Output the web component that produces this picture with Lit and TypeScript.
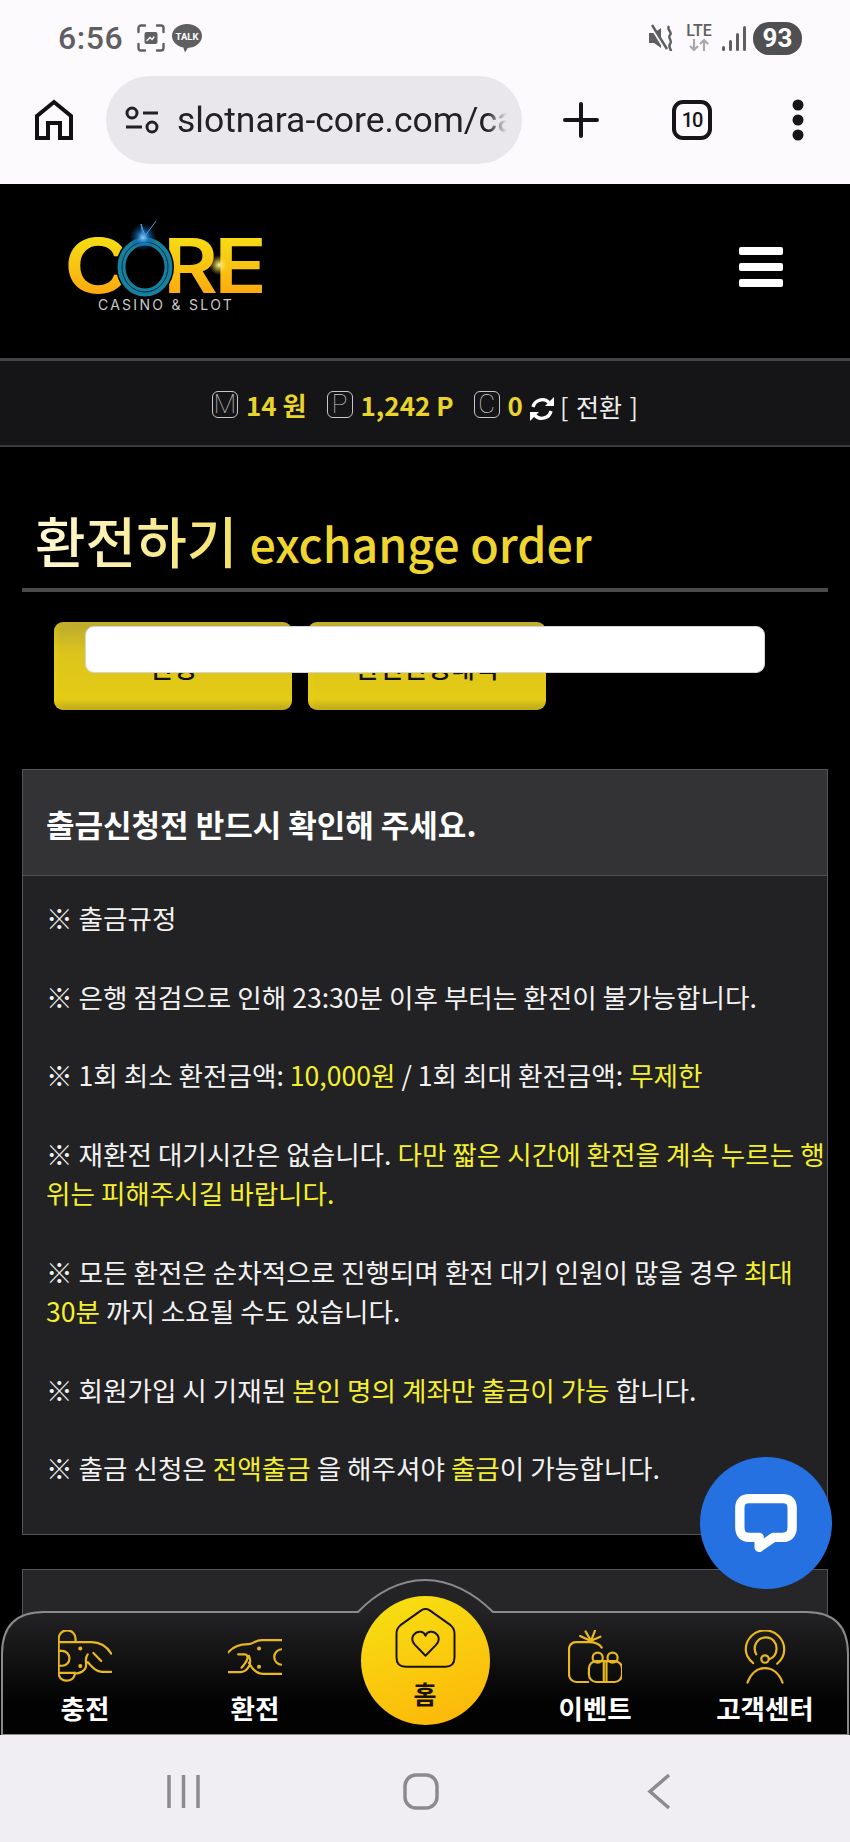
import { LitElement, css, html } from 'lit';
import { customElement } from 'lit/decorators.js';

const iconCharge = html`<svg class="nav-icon" viewBox="0 0 160 160">
  <path d="M52 36V26A25 25 0 0 0 2 26V132A25 25 0 0 0 50 132V126M2 36H100C125 36 145 50 158 70M2 62H12A22 22 0 0 1 12 106H2M2 127H50M105 68L128 92M88 72C74 90 92 104 78 118C70 126 60 130 50 128M88 95C105 115 115 124 130 124H158"/>
  <circle class="dot" cx="66" cy="55" r="6"/><circle class="dot" cx="66" cy="107" r="6"/>
</svg>`;

const iconExchange = html`<svg class="nav-icon" viewBox="0 -27 160 160">
  <path d="M0 40C15 22 35 15 60 15C75 15 80 3 100 3H160M30 45H50C62 48 62 60 40 85M0 98H35C60 98 72 70 62 50M62 70C72 90 85 103 105 103H160M160 30A22 22 0 1 0 160 76"/>
  <circle class="dot" cx="92" cy="28" r="6"/><circle class="dot" cx="92" cy="82" r="6"/>
</svg>`;

const iconEvent = html`<svg class="nav-icon" viewBox="0 0 160 160">
  <path d="M60 154H25A22 22 0 0 1 3 132V56A20 20 0 0 1 23 36H62C80 36 92 40 100 52M52 4L68 32M80 2L68 32M36 18L66 32M96 20L68 32"/>
  <rect x="62" y="92" width="98" height="62" rx="22"/>
  <path d="M106 92V154M114 92V154"/>
  <circle cx="88" cy="82" r="15"/><circle cx="132" cy="82" r="15"/>
</svg>`;

const iconSupport = html`<svg class="nav-icon" viewBox="-20 0 160 160">
  <path d="M25 98C10 86 3 72 3 58A57 57 0 0 1 117 58C117 76 108 90 96 100M34 72C22 50 36 22 62 22C82 22 96 38 94 58C93 72 84 82 74 86M8 156C18 128 38 113 60 113C82 113 102 128 112 156"/>
  <circle cx="60" cy="86" r="11"/>
</svg>`;

@customElement('app-root')
export class AppRoot extends LitElement {
  static styles = css`
    :host {
      display: flex;
      flex-direction: column;
      width: 850px;
      height: 1842px;
      overflow: hidden;
      font-family: "Noto Sans CJK KR", "Noto Sans", sans-serif;
      background: #000;
    }

    /* phone status bar */
    .status {
      height: 76px;
      flex: none;
      background: #fcfafd;
      display: flex;
      align-items: center;
      padding: 0 48px 0 58px;
      color: #5f5f61;
    }
    .time {
      font-family: Roboto, sans-serif;
      font-size: 32px;
      font-weight: 500;
      letter-spacing: 0.6px;
      width: 79px;
    }
    .shot { width: 28px; height: 28px; }
    .talk { width: 30px; height: 30px; margin-left: 7px; }
    .status-right { margin-left: auto; display: flex; align-items: center; }
    .mute { width: 26px; height: 28px; }
    .lte {
      margin-left: 9px;
      width: 30px;
      display: flex;
      flex-direction: column;
      align-items: center;
      font-family: Roboto, sans-serif;
      font-size: 16px;
      font-weight: 500;
      line-height: 14px;
    }
    .lte svg { width: 22px; height: 14px; }
    .signal { width: 24px; height: 26px; margin-left: 8px; }
    .battery {
      margin-left: 7px;
      width: 49px;
      height: 33px;
      border-radius: 16px;
      background: #505052;
      color: #fff;
      font-family: Roboto, sans-serif;
      font-weight: 700;
      font-size: 26px;
      line-height: 33px;
      text-align: center;
    }

    /* browser toolbar */
    .toolbar {
      height: 108px;
      flex: none;
      background: #fcfafd;
      display: flex;
      align-items: center;
      padding-bottom: 20px;
      box-sizing: border-box;
    }
    .t-home { width: 38px; height: 42px; margin-left: 35px; }
    .url {
      margin-left: 33px;
      width: 416px;
      height: 88px;
      border-radius: 44px;
      background: #e9e7eb;
      display: flex;
      align-items: center;
      padding-left: 19px;
      box-sizing: border-box;
      overflow: hidden;
      flex: none;
    }
    .tune { width: 34px; height: 28px; flex: none; }
    .url-text {
      margin-left: 18px;
      width: 330px;
      overflow: hidden;
      white-space: nowrap;
      font-family: Roboto, sans-serif;
      font-size: 35.5px;
      color: #222226;
      -webkit-mask-image: linear-gradient(90deg, #000 94%, transparent);
      mask-image: linear-gradient(90deg, #000 94%, transparent);
    }
    .plus { width: 36px; height: 36px; margin-left: 41px; }
    .tabs {
      margin-left: 73px;
      width: 40px;
      height: 40px;
      border: 4px solid #16161a;
      border-radius: 11px;
      box-sizing: border-box;
      font-family: Roboto, sans-serif;
      font-size: 20px;
      line-height: 32px;
      font-weight: 500;
      text-align: center;
      color: #16161a;
      letter-spacing: -1px;
    }
    .more { width: 12px; height: 42px; margin-left: 80px; }

    /* site */
    .site {
      flex: 1;
      position: relative;
      overflow: hidden;
      background: #000;
    }
    .head {
      height: 174px;
      display: flex;
      justify-content: space-between;
      align-items: flex-start;
      padding: 31px 67px 0 55px;
      box-sizing: border-box;
    }
    .logo { width: 225px; height: 105px; }
    .burger {
      margin-top: 32px;
      display: flex;
      flex-direction: column;
      gap: 8px;
    }
    .burger i {
      display: block;
      width: 44px;
      height: 8px;
      border-radius: 2px;
      background: #fff;
    }
    .balance {
      height: 89px;
      box-sizing: border-box;
      border-top: 3px solid #434345;
      border-bottom: 2px solid #3a3a3c;
      background: #151517;
      display: flex;
      align-items: center;
      padding: 3px 0 0 212px;
      font-weight: 700;
      font-size: 26px;
      color: #e9d42c;
    }
    .balance .coin {
      width: 26px;
      height: 27px;
      border: 1.5px solid #c8c8c8;
      border-radius: 6px;
      box-sizing: border-box;
      color: #c8c8c8;
      font-family: Roboto, sans-serif;
      font-weight: 100;
      font-size: 26px;
      line-height: 24px;
      text-align: center;
      margin-right: 8px;
    }
    .balance .val { margin-right: 20px; line-height: 30px; }
    .balance .refresh { width: 26px; height: 26px; margin: 8px 5px 0 -14px; }
    .balance .swap {
      font-weight: 400;
      color: #eee;
      font-size: 25px;
      margin-top: 3px;
      word-spacing: 2px;
    }

    .title {
      height: 145px;
      margin: 0 22px;
      padding: 57px 0 0 13px;
      box-sizing: border-box;
      border-bottom: 4px solid #4a4a4c;
      display: flex;
      align-items: baseline;
      gap: 12px;
    }
    .title .ko {
      font-size: 55px;
      font-weight: 500;
      line-height: 70px;
      background: linear-gradient(90deg, #fff8d6, #f5e268);
      -webkit-background-clip: text;
      background-clip: text;
      color: transparent;
    }
    .title .en {
      font-size: 46.5px;
      font-weight: 500;
      line-height: 70px;
      color: #eed52f;
    }

    .actions {
      position: relative;
      display: flex;
      gap: 16px;
      padding: 30px 0 0 54px;
    }
    .btn {
      width: 238px;
      height: 88px;
      border-radius: 9px;
      background: linear-gradient(180deg, #bba92e, #dcc41c 35%, #e4cb16 88%, #b9a420);
      box-shadow: inset 4px 0 5px #f0d8184d;
      color: #111;
      font-size: 26px;
      font-weight: 500;
      display: flex;
      align-items: center;
      justify-content: center;
    }
    .mask {
      position: absolute;
      left: 85px;
      top: 34px;
      width: 680px;
      height: 47px;
      box-sizing: border-box;
      background: #fff;
      border: 1px solid #d5d5d5;
      border-radius: 9px;
    }

    .panel {
      margin: 59px 22px 0;
      border: 1px solid #555557;
      background: #222224;
    }
    .panel-head {
      height: 106px;
      box-sizing: border-box;
      background: #333335;
      border-bottom: 1px solid #4f4f51;
      padding: 2px 0 0 23px;
      display: flex;
      align-items: center;
      font-size: 31px;
      font-weight: 700;
      color: #fff;
    }
    .panel-body {
      padding: 22px 0 47px 23px;
      font-size: 26.6px;
      line-height: 39.3px;
      color: #f2f2f2;
    }
    .panel-body em { font-style: normal; color: #f4f02e; }
    .panel.next {
      margin-top: 34px;
      height: 170px;
      background: #262628;
    }

    .chat {
      position: absolute;
      left: 700px;
      top: 1273px;
      width: 132px;
      height: 132px;
      border-radius: 50%;
      background: #2571e2;
      display: flex;
      align-items: center;
      justify-content: center;
    }
    .chat svg { width: 62px; height: 61px; margin-top: 2px; }

    /* bottom tab bar */
    .tabbar {
      position: absolute;
      left: 0;
      right: 0;
      bottom: 0;
      height: 156px;
      display: grid;
      grid-template-columns: repeat(5, 170px);
    }
    .tabbar-bg { position: absolute; inset: 0; width: 850px; height: 156px; }
    .item {
      position: relative;
      display: flex;
      flex-direction: column;
      align-items: center;
      padding-top: 51px;
      color: #fff;
      font-size: 26.5px;
      font-weight: 700;
      line-height: 30px;
      white-space: nowrap;
    }
    .item span { margin-top: 9px; }
    .nav-icon {
      width: 54px;
      height: 54px;
      fill: none;
      stroke: #e9b71f;
      stroke-width: 6.5;
      stroke-linecap: round;
      stroke-linejoin: round;
    }
    .nav-icon .dot { fill: #e9b71f; stroke: none; }
    .home {
      position: relative;
      justify-self: center;
      margin-top: 17px;
      width: 129px;
      height: 129px;
      border-radius: 50%;
      background: linear-gradient(160deg, #f6e211, #fdb40a);
      display: flex;
      flex-direction: column;
      align-items: center;
      padding-top: 12px;
      box-sizing: border-box;
      font-size: 25px;
      font-weight: 700;
      color: #1a1206;
      line-height: 30px;
    }
    .home svg { width: 61px; height: 60px; margin-bottom: 10px; }

    /* android nav */
    .android {
      height: 107px;
      flex: none;
      background: #f0eef2;
    }
    .android svg { display: block; width: 850px; height: 107px; }
  `;

  render() {
    return html`
      <div class="status">
        <span class="time">6:56</span>
        <svg class="shot" viewBox="0 0 28 28" fill="none" stroke="#5f5f61" stroke-width="2.4" stroke-linecap="round">
          <path d="M1.5 8V4A2.5 2.5 0 0 1 4 1.500H8M20 1.500H24A2.500 2.500 0 0 1 26.500 4V8M26.500 20V24A2.500 2.500 0 0 1 24 26.500H20M8 26.500H4A2.500 2.500 0 0 1 1.500 24V20"/>
          <rect x="7.500" y="8" width="13" height="12" rx="2" fill="#5f5f61" stroke="none"/>
          <path d="M10 16.500L13 13.500L15 15.500L17 13" stroke="#fcfafd" stroke-width="1.400"/>
        </svg>
        <svg class="talk" viewBox="0 0 30 30">
          <path d="M15 1C23.300 1 30 6.200 30 13C30 19.600 23.600 24.700 15.800 24.900L13 29.500L11.300 24.600C5 23.300 0 18.600 0 13C0 6.200 6.700 1 15 1Z" fill="#5f5f61"/>
          <text x="15" y="17" text-anchor="middle" font-family="Roboto, sans-serif" font-weight="700" font-size="9.500" fill="#fff">TALK</text>
        </svg>
        <div class="status-right">
          <svg class="mute" viewBox="0 0 26 28" fill="#5f5f61">
            <path d="M0 9H5L12 4V24L5 19H0Z"/>
            <path d="M2 2L16 25" stroke="#fcfafd" stroke-width="3"/>
            <path d="M3 1L18 25" stroke="#5f5f61" stroke-width="2.500"/>
            <path d="M20 2C17 6 24 8 21 11C18 14 24 16 21 20C19 23 22 25 22 27" fill="none" stroke="#5f5f61" stroke-width="2.400"/>
          </svg>
          <div class="lte">
            LTE
            <svg viewBox="0 0 22 14" fill="none" stroke="#a9a9ab" stroke-width="2.200">
              <path d="M6 1V12M2 8L6 12L10 8M16 13V2M12 6L16 2L20 6"/>
            </svg>
          </div>
          <svg class="signal" viewBox="0 0 24 26" fill="#5f5f61">
            <rect x="0" y="21" width="3" height="5" rx="1.500"/>
            <rect x="7" y="15" width="3" height="11" rx="1.500"/>
            <rect x="14" y="8" width="3" height="18" rx="1.500"/>
            <rect x="21" y="1" width="3" height="25" rx="1.500"/>
          </svg>
          <div class="battery">93</div>
        </div>
      </div>

      <div class="toolbar">
        <svg class="t-home" viewBox="0 0 38 42" fill="none" stroke="#111114" stroke-width="4" stroke-linejoin="miter">
          <path d="M2 39V17L19 3L36 17V39H25V24H13V39Z"/>
        </svg>
        <div class="url">
          <svg class="tune" viewBox="0 0 34 28" fill="none" stroke="#222226" stroke-width="3">
            <circle cx="7" cy="7" r="5"/><circle cx="27" cy="21" r="5"/>
            <path d="M18 7H33M1 21H17"/>
          </svg>
          <div class="url-text">slotnara-core.com/ca</div>
        </div>
        <svg class="plus" viewBox="0 0 36 36" stroke="#16161a" stroke-width="4" stroke-linecap="round">
          <path d="M18 2V34M2 18H34"/>
        </svg>
        <div class="tabs">10</div>
        <svg class="more" viewBox="0 0 12 42" fill="#16161a">
          <circle cx="6" cy="6" r="5.500"/><circle cx="6" cy="21" r="5.500"/><circle cx="6" cy="36" r="5.500"/>
        </svg>
      </div>

      <div class="site">
        <div class="head">
          <svg class="logo" viewBox="0 0 225 105">
            <defs>
              <linearGradient id="gold" gradientUnits="userSpaceOnUse" x1="0" y1="24" x2="0" y2="80">
                <stop offset="0" stop-color="#f5dc14"/>
                <stop offset="1" stop-color="#fda90f"/>
              </linearGradient>
              <radialGradient id="flare">
                <stop offset="0" stop-color="#9fd8ff"/>
                <stop offset="0.4" stop-color="#1f7fd0" stop-opacity="0.7"/>
                <stop offset="1" stop-color="#0a3d70" stop-opacity="0"/>
              </radialGradient>
              <radialGradient id="spark">
                <stop offset="0" stop-color="#fff6a0"/>
                <stop offset="1" stop-color="#f5d010" stop-opacity="0"/>
              </radialGradient>
            </defs>
            <g fill="url(#gold)" font-family="Inter, sans-serif" font-weight="600" font-size="75">
              <text x="9" y="78" textLength="66" lengthAdjust="spacingAndGlyphs">C</text>
              <text x="108" y="78" textLength="55" lengthAdjust="spacingAndGlyphs">R</text>
              <text x="159" y="78" textLength="53" lengthAdjust="spacingAndGlyphs">E</text>
            </g>
            <ellipse cx="90" cy="52" rx="29" ry="31" fill="#000"/>
            <ellipse cx="90" cy="52" rx="23.500" ry="25.500" fill="none" stroke="#15809f" stroke-width="8"/>
            <ellipse cx="90" cy="52" rx="23" ry="25" fill="none" stroke="#062a38" stroke-width="1"/>
            <circle cx="88" cy="22" r="14" fill="url(#flare)"/>
            <path d="M101 6L90 21L86 9L88 22" fill="none" stroke="#3f9fe0" stroke-width="1"/>
            <circle cx="164" cy="50" r="10" fill="url(#spark)"/>
            <text x="111" y="95" text-anchor="middle" font-family="Inter, sans-serif" font-size="14" letter-spacing="2.300" fill="#c9c9c9">CASINO &amp; SLOT</text>
          </svg>
          <div class="burger"><i></i><i></i><i></i></div>
        </div>

        <div class="balance">
          <div class="coin">M</div><div class="val">14 원</div>
          <div class="coin">P</div><div class="val">1,242 P</div>
          <div class="coin">C</div><div class="val">0</div>
          <svg class="refresh" viewBox="0 0 26 26" fill="#fff">
            <path d="M4 11A9.500 9.500 0 0 1 20 6.500" fill="none" stroke="#fff" stroke-width="3.400"/>
            <path d="M16 10H25V1Z"/>
            <path d="M22 15A9.500 9.500 0 0 1 6 19.500" fill="none" stroke="#fff" stroke-width="3.400"/>
            <path d="M10 16H1V25Z"/>
          </svg>
          <div class="swap">[ 전환 ]</div>
        </div>

        <div class="title">
          <span class="ko">환전하기</span>
          <span class="en">exchange order</span>
        </div>

        <div class="actions">
          <div class="btn">신청</div>
          <div class="btn">환전신청내역</div>
          <div class="mask"></div>
        </div>

        <div class="panel">
          <div class="panel-head">출금신청전 반드시 확인해 주세요.</div>
          <div class="panel-body">
            ※ 출금규정<br><br>
            ※ 은행 점검으로 인해 23:30분 이후 부터는 환전이 불가능합니다.<br><br>
            ※ 1회 최소 환전금액: <em>10,000원</em> / 1회 최대 환전금액: <em>무제한</em><br><br>
            ※ 재환전 대기시간은 없습니다. <em>다만 짧은 시간에 환전을 계속 누르는 행위는 피해주시길 바랍니다.</em><br><br>
            ※ 모든 환전은 순차적으로 진행되며 환전 대기 인원이 많을 경우 <em>최대 30분</em> 까지 소요될 수도 있습니다.<br><br>
            ※ 회원가입 시 기재된 <em>본인 명의 계좌만 출금이 가능</em> 합니다.<br><br>
            ※ 출금 신청은 <em>전액출금</em> 을 해주셔야 <em>출금</em>이 가능합니다.
          </div>
        </div>
        <div class="panel next"></div>

        <div class="chat">
          <svg viewBox="0 0 185 183" fill="none" stroke="#fff" stroke-width="28" stroke-linejoin="round">
            <path d="M42 14H143Q171 14 171 42V100Q171 130 141 130H115L72 160V130H42Q14 130 14 100V42Q14 14 42 14Z"/>
          </svg>
        </div>

        <div class="tabbar">
          <svg class="tabbar-bg" viewBox="0 0 850 156">
            <defs>
              <linearGradient id="barfill" x1="0" y1="0" x2="0" y2="1">
                <stop offset="0.2" stop-color="#232325"/>
                <stop offset="0.8" stop-color="#020202"/>
              </linearGradient>
            </defs>
            <path d="M2 156V75Q2 33 44 33H358C376 14 400 1 425 1C450 1 474 14 493 33H806Q848 33 848 75V156Z" fill="url(#barfill)" stroke="#8a8a8c" stroke-width="2"/>
          </svg>
          <div class="item">${iconCharge}<span>충전</span></div>
          <div class="item">${iconExchange}<span>환전</span></div>
          <div class="home">
            <svg viewBox="0 0 184 182" fill="none" stroke="#1a1206" stroke-width="6" stroke-linejoin="round">
              <path d="M4 78Q4 62 16 52L78 8Q92 -2 106 8L168 52Q180 62 180 78V150Q180 178 152 178H32Q4 178 4 150Z"/>
              <path d="M92 145L60 112C40 88 62 70 78 72C86 73 90 78 92 84C94 78 98 73 106 72C122 70 144 88 124 112Z"/>
            </svg>
            홈
          </div>
          <div class="item">${iconEvent}<span>이벤트</span></div>
          <div class="item">${iconSupport}<span>고객센터</span></div>
        </div>
      </div>

      <div class="android">
        <svg viewBox="0 0 850 107" fill="none" stroke="#8b8b8d" stroke-width="3.500">
          <path d="M169 40V73M183.500 40V73M198 40V73"/>
          <rect x="405" y="40" width="32" height="33" rx="11"/>
          <path d="M669 40L650 56.500L669 73"/>
        </svg>
      </div>
    `;
  }
}

declare global {
  interface HTMLElementTagNameMap {
    'app-root': AppRoot;
  }
}
